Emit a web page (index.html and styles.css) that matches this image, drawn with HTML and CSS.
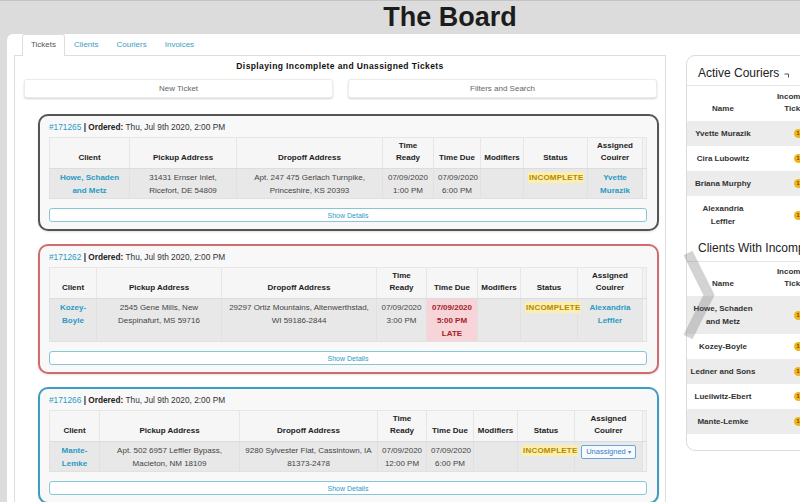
FILE: index.html
```html
<!DOCTYPE html>
<html lang="en">
<head>
<meta charset="utf-8">
<title>The Board</title>
<link rel="stylesheet" href="styles.css">
</head>
<body>
<header class="topbar"><h1 class="brand">The Board</h1></header>
<div class="board">
  <div class="main-col">
    <ul class="tabs">
      <li class="tab is-active">Tickets</li>
      <li class="tab">Clients</li>
      <li class="tab">Couriers</li>
      <li class="tab">Invoices</li>
    </ul>
    <section class="tab-pane">
      <h2 class="pane-title">Displaying Incomplete and Unassigned Tickets</h2>
      <div class="actions">
        <button class="btn">New Ticket</button>
        <button class="btn">Filters and Search</button>
      </div>
      <div class="tickets">
        <article class="ticket ticket--default">
          <div class="ticket-meta"><span class="link-plain">#171265</span> <b>| Ordered:</b> Thu, Jul 9th 2020, 2:00 PM</div>
          <table class="ticket-table cols-a">
            <colgroup><col><col><col><col><col><col><col><col><col></colgroup>
            <thead><tr><th>Client</th><th>Pickup Address</th><th>Dropoff Address</th><th>Time<br>Ready</th><th>Time Due</th><th>Modifiers</th><th>Status</th><th>Assigned<br>Couirer</th><th class="gutter"></th></tr></thead>
            <tbody><tr>
              <td><span class="link">Howe, Schaden and Metz</span></td>
              <td>31431 Ernser Inlet, Ricefort, DE 54809</td>
              <td>Apt. 247 475 Gerlach Turnpike, Princeshire, KS 20393</td>
              <td>07/09/2020 1:00 PM</td>
              <td>07/09/2020 6:00 PM</td>
              <td></td>
              <td><span class="status">INCOMPLETE</span></td>
              <td><span class="link">Yvette Murazik</span></td>
              <td class="gutter"></td>
            </tr></tbody>
          </table>
          <button class="show-details">Show Details</button>
        </article>

        <article class="ticket ticket--late">
          <div class="ticket-meta"><span class="link-plain">#171262</span> <b>| Ordered:</b> Thu, Jul 9th 2020, 2:00 PM</div>
          <table class="ticket-table cols-b">
            <colgroup><col><col><col><col><col><col><col><col><col></colgroup>
            <thead><tr><th>Client</th><th>Pickup Address</th><th>Dropoff Address</th><th>Time<br>Ready</th><th>Time Due</th><th>Modifiers</th><th>Status</th><th>Assigned<br>Couirer</th><th class="gutter"></th></tr></thead>
            <tbody><tr>
              <td><span class="link">Kozey-Boyle</span></td>
              <td>2545 Gene Mills, New Despinafurt, MS 59716</td>
              <td>29297 Ortiz Mountains, Altenwerthstad, WI 59186-2844</td>
              <td>07/09/2020 3:00 PM</td>
              <td class="late">07/09/2020 5:00 PM LATE</td>
              <td></td>
              <td><span class="status">INCOMPLETE</span></td>
              <td><span class="link">Alexandria Leffler</span></td>
              <td class="gutter"></td>
            </tr></tbody>
          </table>
          <button class="show-details">Show Details</button>
        </article>

        <article class="ticket ticket--unassigned">
          <div class="ticket-meta"><span class="link-plain">#171266</span> <b>| Ordered:</b> Thu, Jul 9th 2020, 2:00 PM</div>
          <table class="ticket-table cols-c">
            <colgroup><col><col><col><col><col><col><col><col><col></colgroup>
            <thead><tr><th>Client</th><th>Pickup Address</th><th>Dropoff Address</th><th>Time<br>Ready</th><th>Time Due</th><th>Modifiers</th><th>Status</th><th>Assigned<br>Couirer</th><th class="gutter"></th></tr></thead>
            <tbody><tr>
              <td><span class="link">Mante-Lemke</span></td>
              <td>Apt. 502 6957 Leffler Bypass, Macieton, NM 18109</td>
              <td>9280 Sylvester Flat, Cassintown, IA 81373-2478</td>
              <td>07/09/2020 12:00 PM</td>
              <td>07/09/2020 6:00 PM</td>
              <td></td>
              <td><span class="status">INCOMPLETE</span></td>
              <td><span class="assign-select">Unassigned <span class="caret">▾</span></span></td>
              <td class="gutter"></td>
            </tr></tbody>
          </table>
          <button class="show-details">Show Details</button>
        </article>
      </div>
    </section>
  </div>

  <aside class="side-panel">
    <h3 class="side-title">Active Couriers <svg class="collapse-icon" width="6" height="5" viewBox="0 0 6 5"><path d="M0.5 1 H4.5 V4.5" fill="none" stroke="#555" stroke-width="1"/></svg></h3>
    <table class="side-table">
      <colgroup><col class="name-col"><col></colgroup>
      <thead><tr><th>Name</th><th>Incomplete<br>Tickets</th></tr></thead>
      <tbody>
        <tr><td>Yvette Murazik</td><td><span class="badge">1</span></td></tr>
        <tr><td>Cira Lubowitz</td><td><span class="badge">1</span></td></tr>
        <tr><td>Briana Murphy</td><td><span class="badge">1</span></td></tr>
        <tr><td>Alexandria Leffler</td><td><span class="badge">1</span></td></tr>
      </tbody>
    </table>
    <h3 class="side-title side-title--second">Clients With Incomplete Tickets</h3>
    <table class="side-table side-table--clients">
      <colgroup><col class="name-col"><col></colgroup>
      <thead><tr><th>Name</th><th>Incomplete<br>Tickets</th></tr></thead>
      <tbody>
        <tr><td>Howe, Schaden and Metz</td><td><span class="badge">1</span></td></tr>
        <tr><td>Kozey-Boyle</td><td><span class="badge">1</span></td></tr>
        <tr><td>Ledner and Sons</td><td><span class="badge">1</span></td></tr>
        <tr><td>Lueilwitz-Ebert</td><td><span class="badge">1</span></td></tr>
        <tr><td>Mante-Lemke</td><td><span class="badge">1</span></td></tr>
      </tbody>
    </table>
  </aside>

  <svg class="carousel-chevron" width="32" height="90" viewBox="0 0 32 90"><polyline points="5,3 26,45 5,87" fill="none" stroke="rgba(110,110,110,0.3)" stroke-width="10"/></svg>
</div>
</body>
</html>
```

FILE: styles.css
```css
* { box-sizing: border-box; }

html, body {
  margin: 0;
  width: 800px;
  height: 502px;
  overflow: hidden;
}

body {
  background: #dcdcdc;
  font-family: "Liberation Sans", Arial, sans-serif;
  color: #333;
}

.topbar {
  height: 34px;
  border-top: 1px solid #c4c4c4;
}

.brand {
  margin: 0;
  padding-left: 100px;
  text-align: center;
  font-size: 27px;
  line-height: 33px;
  font-weight: bold;
  color: #1c1c1c;
}

.board {
  position: relative;
  margin-left: 7px;
  height: 468px;
  padding-left: 7px;
  background: #fff;
  border-top-left-radius: 6px;
  display: flex;
  align-items: flex-start;
  overflow: hidden;
}

.main-col {
  flex: none;
  width: 652px;
  height: 100%;
  display: flex;
  flex-direction: column;
}

.tabs {
  display: flex;
  list-style: none;
  margin: 0;
  padding: 0 0 0 8px;
  height: 21px;
}

.tab {
  padding: 0 8px;
  line-height: 20px;
  font-size: 8px;
  color: #3aa0c0;
  border: 1px solid transparent;
  border-bottom: none;
  border-radius: 3px 3px 0 0;
}

.tab.is-active {
  color: #555;
  background: #fff;
  border-color: #ddd;
  height: 22px;
  position: relative;
  z-index: 1;
}

.tab-pane {
  flex: 1;
  border: 1px solid #dedede;
  border-bottom: none;
}

.pane-title {
  margin: 4px 0 7px;
  font-size: 8.5px;
  line-height: 12px;
  font-weight: bold;
  text-align: center;
  color: #111;
  letter-spacing: 0.4px;
}

.actions {
  display: grid;
  grid-template-columns: 1fr 1fr;
  gap: 15px;
  padding: 0 8px 0 9px;
}

.btn {
  height: 19px;
  font-family: inherit;
  font-size: 8px;
  color: #666;
  background: #fff;
  border: 1px solid #ececec;
  border-radius: 3px;
  box-shadow: 0 1px 2px rgba(0, 0, 0, 0.18);
}

.tickets {
  display: flex;
  flex-direction: column;
  gap: 13px;
  padding: 16px 6px 0 23px;
}

.ticket {
  border: 2px solid #555;
  border-radius: 10px;
  background: #f8f8f8;
  padding: 5px 11px 7px 9px;
  box-shadow: 0 1px 2px rgba(0, 0, 0, 0.12);
}

.ticket--late { border-color: #d26b6b; }
.ticket--unassigned { border-color: #3d9cc2; }

.ticket-meta {
  font-size: 8.3px;
  line-height: 12px;
  margin-bottom: 4px;
  color: #333;
}

.ticket-meta b { color: #222; }

.link-plain { color: #2b9ac4; }

.ticket-table {
  width: 597px;
  border-collapse: collapse;
  table-layout: fixed;
  font-size: 8px;
}

.ticket-table th {
  font-weight: bold;
  padding: 2px 2px 4px;
  line-height: 12px;
  vertical-align: bottom;
  text-align: center;
  white-space: nowrap;
  border: 1px solid #e6e6e6;
  border-bottom-color: #dcdcdc;
  background: #f6f6f6;
  color: #222;
}

.ticket-table td {
  padding: 2px 4px 1px;
  line-height: 13px;
  vertical-align: top;
  text-align: center;
  background: #e8e8e8;
  border: 1px solid #e1e1e1;
  color: #444;
}

.ticket-table .gutter { background: #f2f2f2; padding: 0; }

.cols-a col:nth-child(1) { width: 80px; }
.cols-a col:nth-child(2) { width: 107px; }
.cols-a col:nth-child(3) { width: 146px; }
.cols-a col:nth-child(4) { width: 51px; }
.cols-a col:nth-child(5) { width: 47px; }
.cols-a col:nth-child(6) { width: 43px; }
.cols-a col:nth-child(7) { width: 64px; }
.cols-a col:nth-child(8) { width: 55px; }
.cols-a col:nth-child(9) { width: 4px; }

.cols-b col:nth-child(1) { width: 47px; }
.cols-b col:nth-child(2) { width: 125px; }
.cols-b col:nth-child(3) { width: 155px; }
.cols-b col:nth-child(4) { width: 50px; }
.cols-b col:nth-child(5) { width: 51px; }
.cols-b col:nth-child(6) { width: 43px; }
.cols-b col:nth-child(7) { width: 57px; }
.cols-b col:nth-child(8) { width: 65px; }
.cols-b col:nth-child(9) { width: 4px; }

.cols-c col:nth-child(1) { width: 50px; }
.cols-c col:nth-child(2) { width: 140px; }
.cols-c col:nth-child(3) { width: 138px; }
.cols-c col:nth-child(4) { width: 49px; }
.cols-c col:nth-child(5) { width: 47px; }
.cols-c col:nth-child(6) { width: 44px; }
.cols-c col:nth-child(7) { width: 57px; }
.cols-c col:nth-child(8) { width: 68px; }
.cols-c col:nth-child(9) { width: 4px; }

.link {
  color: #2b9ac4;
  font-weight: bold;
}

.status {
  display: inline-block;
  background: #fbeeae;
  color: #b38a00;
  font-weight: bold;
  padding: 0 1px;
  line-height: 11px;
  letter-spacing: 0.2px;
}

.ticket-table td.late {
  background: #f6d4d7;
  color: #a3222b;
  font-weight: bold;
}

.assign-select {
  display: inline-block;
  border: 1px solid #6aa6de;
  border-radius: 2px;
  padding: 0 4px;
  font-size: 7.5px;
  line-height: 12px;
  color: #3b80c6;
  background: #f6f9fe;
  margin-top: 1px;
}

.caret { font-size: 6px; }

.show-details {
  display: block;
  width: 598px;
  height: 14px;
  margin-top: 9px;
  border: 1px solid #86c6d6;
  border-radius: 3px;
  background: #fff;
  color: #2b9ac4;
  font-family: inherit;
  font-size: 7px;
  text-align: center;
  padding: 0;
}

.side-panel {
  flex: none;
  margin-left: 20px;
  margin-top: 21px;
  width: 150px;
  border: 1px solid #dcdcdc;
  border-radius: 9px;
  background: #fff;
  padding-bottom: 16px;
}

.side-title {
  margin: 0;
  padding: 10px 11px 5px;
  font-size: 12px;
  line-height: 14px;
  font-weight: normal;
  color: #222;
  white-space: nowrap;
  border-bottom: 1px solid #e4e4e4;
}

.side-title--second { padding-top: 7px; padding-bottom: 6px; }

.collapse-icon { vertical-align: -1px; margin-left: 1px; }

.side-table {
  width: 150px;
  border-collapse: collapse;
  table-layout: fixed;
  font-size: 8px;
}

.side-table .name-col { width: 72px; }

.side-table th {
  font-weight: bold;
  line-height: 12px;
  padding: 5px 3px 6px;
  vertical-align: bottom;
  text-align: center;
  white-space: nowrap;
  color: #333;
}

.side-table--clients th { padding-top: 4px; }

.side-table td {
  padding: 6px 3px;
  line-height: 13px;
  font-weight: bold;
  text-align: center;
  color: #333;
}

.side-table tbody tr:nth-child(odd) td { background: #ececec; }

.badge {
  display: inline-block;
  width: 9px;
  height: 9px;
  border-radius: 50%;
  background: #f3b41a;
  color: #6b4d00;
  font-size: 6px;
  line-height: 9px;
  text-align: center;
  vertical-align: middle;
}

.carousel-chevron {
  position: absolute;
  left: 676px;
  top: 216px;
}
```
